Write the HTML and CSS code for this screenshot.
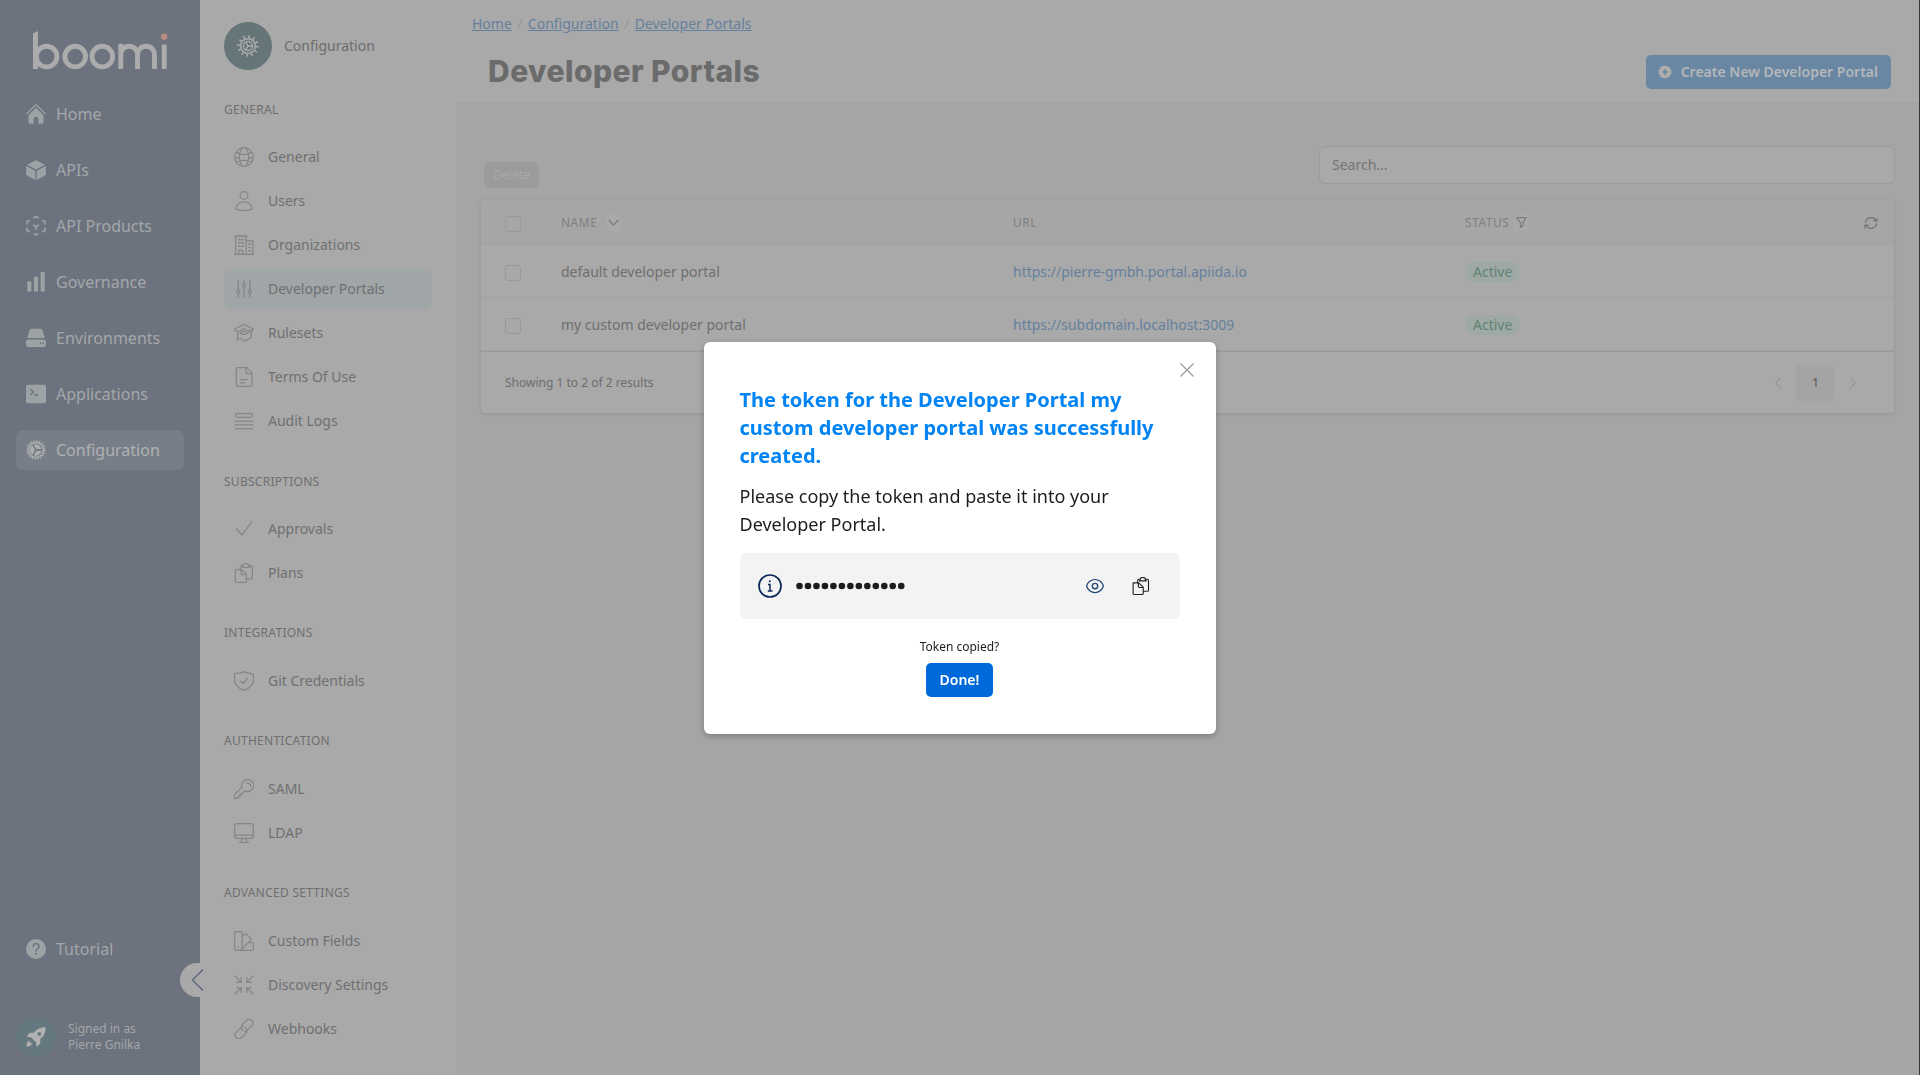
FILE: index.html
```html
<!DOCTYPE html>
<html lang="en">
<head>
<meta charset="utf-8">
<title>Developer Portals</title>
<link rel="stylesheet" href="styles.css">
</head>
<body>
<svg class="sprite" xmlns="http://www.w3.org/2000/svg">
  <symbol id="cog" viewBox="0 0 24 24"><circle cx="12" cy="12" r="10.200" fill="none" stroke="currentColor" stroke-width="3" stroke-dasharray="1.700 3.641"/><circle cx="12" cy="12" r="8" fill="none" stroke="currentColor" stroke-width="1.600"/><circle cx="12" cy="12" r="5" fill="none" stroke="currentColor" stroke-width="1.400"/><path d="M12 12h5M12 12 9.500 7.700M12 12l-2.500 4.300" fill="none" stroke="currentColor" stroke-width="1.600"/></symbol>
  <symbol id="cog-solid" viewBox="0 0 24 24"><circle cx="12" cy="12" r="10.600" fill="none" stroke="currentColor" stroke-width="2.200" stroke-dasharray="1.500 1.830"/><circle cx="12" cy="12" r="9" fill="none" stroke="currentColor" stroke-width="1.700"/><path d="M10.300 11.200 7.500 6.400A7 7 0 0 0 7.500 17.600l2.800-4.800a2 2 0 0 1 0-1.600zM12.600 10.900h5.900A7 7 0 0 0 9.600 5.400zM12.600 13.100h5.900A7 7 0 0 1 9.600 18.600z" fill="currentColor"/></symbol>
  <symbol id="home" viewBox="0 0 24 24"><path d="M.7 12 11 1.500a1.400 1.400 0 0 1 2 0L23.300 12" fill="none" stroke="currentColor" stroke-width="1.500" stroke-linecap="round"/><path d="M12 4.500 3 13.500V22a1.700 1.700 0 0 0 1.700 1.700h4.500V18a2.800 2.800 0 0 1 5.600 0v5.700h4.500A1.700 1.700 0 0 0 21 22v-8.500z" fill="currentColor"/></symbol>
  <symbol id="cube" viewBox="0 0 24 24"><path d="M12 .2 22.800 5.700 12 11.300 1.200 5.700zM.2 7.300 11.200 13v11L1.200 18.700a1.800 1.800 0 0 1-1-1.600zM23.800 7.300 12.800 13v11l10-5.300a1.800 1.800 0 0 0 1-1.600z" fill="currentColor"/></symbol>
  <symbol id="api-products" viewBox="0 0 24 24"><path d="M9.500 2 12 .8 14.500 2M4 5.300 1.200 6.800V9.500M1.200 15v2.500L4 19M20 5.300l2.800 1.500V9.500M22.800 15v2.500L20 19M9.300 11l2.700 1.600 2.700-1.600M12 12.600v2.900" fill="none" stroke="currentColor" stroke-width="2" stroke-linecap="round" stroke-linejoin="round"/><path d="M9 21.500h6l-3 2z" fill="currentColor" stroke="currentColor" stroke-linejoin="round"/></symbol>
  <symbol id="bars" viewBox="0 0 24 24"><g fill="currentColor"><rect x="1.500" y="11" width="5" height="12.800" rx="1.600"/><rect x="9.500" y="5.500" width="5" height="18.300" rx="1.600"/><rect x="17.500" y="0" width="5" height="23.800" rx="1.600"/></g></symbol>
  <symbol id="drive" viewBox="0 0 24 24"><path d="M4.300 2.700A2.500 2.500 0 0 1 6.700 1h10.600a2.500 2.500 0 0 1 2.400 1.700l2.900 9.300H1.400z" fill="currentColor"/><path d="M3 13.700h18a3 3 0 0 1 3 3v3a3 3 0 0 1-3 3H3a3 3 0 0 1-3-3v-3a3 3 0 0 1 3-3zm13.500 3.400v2h1.500v-2zm3 0v2H21v-2z" fill="currentColor" fill-rule="evenodd"/></symbol>
  <symbol id="terminal" viewBox="0 0 24 24"><path fill-rule="evenodd" d="M2 1h20a2 2 0 0 1 2 2v18a2 2 0 0 1-2 2H2a2 2 0 0 1-2-2V3a2 2 0 0 1 2-2zm2.500 5.500 3.300 3-3.300 3 1.200 1.200 4.300-4.200-4.300-4.200zM9.700 12v1.700h4.800V12z" fill="currentColor"/></symbol>
  <symbol id="help" viewBox="0 0 24 24"><circle cx="12" cy="12" r="12" fill="currentColor"/><path d="M8.500 9a3.500 3.500 0 1 1 5.200 3c-1.200.7-1.700 1.200-1.700 2.700" fill="none" stroke="#6c737e" stroke-width="1.600" stroke-linecap="round"/><circle cx="12" cy="18" r="1.100" fill="#6c737e"/></symbol>
  <symbol id="rocket" viewBox="0 0 24 24"><path fill-rule="evenodd" d="M23.500.4C17 .3 12.500 3 9.500 7H5.500C3.500 7.500 2 9.700 1 12l4.700.3L12 18.300l.4 5.300c2.300-1 4.500-2.700 4.800-4.700l-.2-4.300c4-3.200 6.800-7.500 6.500-14.200zM16 6a2.300 2.300 0 1 1 0 4.600A2.300 2.300 0 0 1 16 6zM4.300 15.500c-2 .8-3.500 4-4 8 4-.4 7.200-2 8-4l-2.600.8.500-2.300-2.700.5z" fill="currentColor"/></symbol>
  <symbol id="globe" viewBox="0 0 24 24"><g class="line"><circle cx="12" cy="12" r="11.200"/><path d="M9.500 1.200C5.500 8 5.500 16 9.500 22.800M14.500 1.200c4 6.800 4 14.800 0 21.600M2.500 6.500c6 3 13 3 19 0M2.500 17.500c6-2 13-2 19 0M.8 12.500c2 .8 4 1 6 1.200M17.200 13.700c2-.2 4-.4 6-1.200"/></g></symbol>
  <symbol id="user" viewBox="0 0 24 24"><g class="line"><circle cx="12" cy="5.300" r="4.600"/><path d="M2.500 21.500C2.500 16 6.500 12.900 12 12.900s9.500 3.100 9.500 8.600c-2 1.300-5 1.900-9.500 1.900s-7.500-.6-9.500-1.900z"/></g></symbol>
  <symbol id="building" viewBox="0 0 24 24"><g class="line"><path d="M0 23.200h24M2 23V1.500h12.500V23M.8 1h15M14.500 7h8v16M6 23v-4.500h4.500V23"/><path d="M5.500 5.500h1.500M9.500 5.500H11M5.500 9.500h1.500M9.500 9.500H11M5.500 13.500h1.500M9.500 13.500H11M18 11h1.200M18 15h1.200M18 19h1.200" stroke-width="2"/></g></symbol>
  <symbol id="sliders" viewBox="0 0 24 24"><g class="line" stroke-width="2"><path d="M5 1.800v11M5 17v5.200M12 1.800v3.500M12 9.500v12.700M19 1.800v11M19 17v5.200"/><circle cx="5" cy="15" r="1.900"/><circle cx="12" cy="7.500" r="1.900"/><circle cx="19" cy="15" r="1.900"/></g></symbol>
  <symbol id="cap" viewBox="0 0 24 24"><g class="line"><path d="M12 1.500-.3 8 4 10.500 14 6.500M12 1.500 24.300 8 12 14M4.500 10.500V21M8 12.500c0-1.800 2.200-2.500 4-2.500l7-1.500M3 19l1.500-1.500L6 19M7 12.500 12 14M8 18.500l4.500 3.200 8.300-4.200V10"/></g></symbol>
  <symbol id="doc" viewBox="0 0 24 24"><g class="line"><path d="M4.500.7h10.700l6.300 6.300v14.500a1.800 1.800 0 0 1-1.800 1.800H4.500a1.800 1.800 0 0 1-1.800-1.800v-19A1.800 1.800 0 0 1 4.500.7zM14.500.9v5a2 2 0 0 0 2 2h4.800M7.500 15h9M7.500 19h5"/></g></symbol>
  <symbol id="logs" viewBox="0 0 24 24"><g class="line"><rect x="1.800" y="3" width="20.400" height="4.500" rx="2"/><path d="M1.500 12h21M1.500 16.500h21M1.500 21h21"/></g></symbol>
  <symbol id="check" viewBox="0 0 24 24"><path class="line" d="m2.800 11.700 6.700 7.700L21.500 3.200"/></symbol>
  <symbol id="clipboard" viewBox="0 0 24 24"><g class="line"><path d="M1.500 7.800H9l6 6v8a1.500 1.500 0 0 1-1.500 1.500H3A1.500 1.500 0 0 1 1.500 22zM8.500 8v4.500a1.500 1.500 0 0 0 1.500 1.500h4.800M7.500 7.500v-3A1.500 1.500 0 0 1 9 3h2M17.500 3h3A1.500 1.500 0 0 1 22 4.500v13a1.500 1.500 0 0 1-1.500 1.500h-5.300M11 3a3.500 2.500 0 0 1 7 0l1 2.200h-9z"/></g></symbol>
  <symbol id="shield" viewBox="0 0 24 24"><g class="line"><path d="M.8 4.300A1.500 1.500 0 0 1 2.300 3C6 3 9.500 2 12 .7 14.500 2 18 3 21.700 3a1.500 1.500 0 0 1 1.500 1.500V10c0 6-4.500 11-11.200 13.300C5.300 21 .8 16 .8 10z"/><path d="m7.800 12 3.500 3.200 4.800-6.500"/></g></symbol>
  <symbol id="key" viewBox="0 0 24 24"><g class="line"><path d="M16.500.5a7.300 7.300 0 0 0-7 9.300L.5 19v4.300h4.300v-2.500h2.500v-2.600h2.500l3-4a7.300 7.300 0 1 0 3.700-13.700zM15.500 5c2.500 0 4.500 1.500 4.500 4"/></g></symbol>
  <symbol id="monitor" viewBox="0 0 24 24"><g class="line"><rect x=".8" y=".8" width="22.400" height="17.700" rx="2.500"/><path d="M1 14.500h22M9.500 18.500 8.500 23M14.500 18.500l1 4.500M6.500 23.200h11"/></g></symbol>
  <symbol id="swatch" viewBox="0 0 24 24"><g class="line"><rect x=".8" y=".8" width="9" height="22.400" rx="2"/><path d="m10 6.500 2.700-2.700a1.400 1.400 0 0 1 2 0L20 9a1.400 1.400 0 0 1 0 2L8.500 22.500M17.500 14h4.200a1.500 1.500 0 0 1 1.500 1.500v6.200a1.500 1.500 0 0 1-1.500 1.500H6M5 19v.3"/></g></symbol>
  <symbol id="collapse" viewBox="0 0 24 24"><g class="line" stroke-width="1.800"><path d="m1.500 1.500 7 7M8.700 3v5.700H3M22.500 1.500l-7 7M15.300 3v5.700H21M1.500 22.500l7-7M8.700 21v-5.700H3M22.500 22.500l-7-7M15.300 21v-5.700H21"/></g></symbol>
  <symbol id="link" viewBox="0 0 24 24"><g class="line"><path d="m10.500 8.500-8 7.500a4.600 4.600 0 0 0 6.500 6.500l5-5a4.600 4.600 0 0 0 0-6.500l-1-.8M13.500 15.500l8-7.500A4.600 4.600 0 0 0 15 1.500l-5 5a4.600 4.600 0 0 0 0 6.500l1 .8"/></g></symbol>
  <symbol id="refresh" viewBox="0 0 24 24"><path d="M2.500 10.500A10 10 0 0 1 21 8M21.500 13.500A10 10 0 0 1 3 16M22.700 3.500 22 9l-5.500-1M1.300 20.500 2 15l5.500 1" fill="none" stroke="currentColor" stroke-width="2" stroke-linecap="round" stroke-linejoin="round"/></symbol>
</svg>

<div class="app">
  <nav class="sidebar">
    <svg class="logo" viewBox="0 0 135 39" width="135" height="39" role="img" aria-label="boomi">
      <g fill="none" stroke="#acacac" stroke-width="4.900">
        <path d="M2.450 38V2.500"/>
        <circle cx="13.600" cy="25.600" r="10.300"/><circle cx="42.200" cy="25.600" r="10.300"/><circle cx="69.300" cy="25.600" r="10.300"/>
        <path d="M87.800 38V12.800M87.800 24.500c0-5 3-9.200 8.400-9.200s8.300 4 8.300 9.200V38M104.500 24.500c0-5 3-9.200 8.500-9.200s8.500 4 8.500 9.200V38M131.200 38V13.500"/>
      </g>
      <path d="M0 2.500 4.900 0v5H0z" fill="#acacac"/>
      <circle cx="131.200" cy="5.800" r="3.200" fill="#b68a80"/>
    </svg>
    <ul class="nav">
      <li class="nav-item"><svg><use href="#home"/></svg>Home</li>
      <li class="nav-item"><svg><use href="#cube"/></svg>APIs</li>
      <li class="nav-item"><svg><use href="#api-products"/></svg>API Products</li>
      <li class="nav-item"><svg><use href="#bars"/></svg>Governance</li>
      <li class="nav-item"><svg><use href="#drive"/></svg>Environments</li>
      <li class="nav-item"><svg><use href="#terminal"/></svg>Applications</li>
      <li class="nav-item nav-item--active"><svg><use href="#cog-solid"/></svg>Configuration</li>
    </ul>
    <div class="nav-item nav-item--bottom"><svg><use href="#help"/></svg>Tutorial</div>
    <div class="account">
      <span class="avatar"><svg><use href="#rocket"/></svg></span>
      <span>Signed in as<br>Pierre Gnilka</span>
    </div>
    <button class="collapse-toggle" aria-label="Collapse"><svg viewBox="0 0 12 22"><path d="M12 .5 1.500 11 12 21.500" fill="none" stroke="#647080" stroke-width="1.600"/></svg></button>
  </nav>

  <aside class="settings">
    <div class="settings-head"><span class="settings-badge"><svg><use href="#cog"/></svg></span>Configuration</div>
    <h2 class="group">General</h2>
    <ul class="menu">
      <li><svg><use href="#globe"/></svg>General</li>
      <li><svg><use href="#user"/></svg>Users</li>
      <li><svg><use href="#building"/></svg>Organizations</li>
      <li class="active"><svg><use href="#sliders"/></svg>Developer Portals</li>
      <li><svg><use href="#cap"/></svg>Rulesets</li>
      <li><svg><use href="#doc"/></svg>Terms Of Use</li>
      <li><svg><use href="#logs"/></svg>Audit Logs</li>
    </ul>
    <h2 class="group">Subscriptions</h2>
    <ul class="menu">
      <li><svg><use href="#check"/></svg>Approvals</li>
      <li><svg><use href="#clipboard"/></svg>Plans</li>
    </ul>
    <h2 class="group">Integrations</h2>
    <ul class="menu">
      <li><svg><use href="#shield"/></svg>Git Credentials</li>
    </ul>
    <h2 class="group">Authentication</h2>
    <ul class="menu">
      <li><svg><use href="#key"/></svg>SAML</li>
      <li><svg><use href="#monitor"/></svg>LDAP</li>
    </ul>
    <h2 class="group">Advanced Settings</h2>
    <ul class="menu">
      <li><svg><use href="#swatch"/></svg>Custom Fields</li>
      <li><svg><use href="#collapse"/></svg>Discovery Settings</li>
      <li><svg><use href="#link"/></svg>Webhooks</li>
    </ul>
  </aside>

  <main class="content">
    <header class="page-head">
      <div class="crumbs"><a>Home</a><i>/</i><a>Configuration</a><i>/</i><a>Developer Portals</a></div>
      <div class="title-row">
        <h1>Developer Portals</h1>
        <button class="create"><svg viewBox="0 0 14 14"><circle cx="7" cy="7" r="6.500" fill="#acacac"/><path d="M7 4v6M4 7h6" stroke="#6986a2" stroke-width="1.500"/></svg>Create New Developer Portal</button>
      </div>
    </header>
    <div class="toolbar">
      <button class="delete">Delete</button>
      <div class="search">Search...</div>
    </div>
    <section class="table">
      <div class="row row--head">
        <span class="box"></span>
        <span class="cell">NAME<span class="chip chip--sort"><svg viewBox="0 0 12 8"><path d="m.7 1 5.300 5.600L11.300 1" fill="none" stroke="currentColor" stroke-width="1.200"/></svg></span></span>
        <span>URL</span>
        <span class="cell">STATUS<span class="chip"><svg viewBox="0 0 12 12"><path d="M.8.800h10.400L7.500 6.200v3.600L4.800 11.300V6.200z" fill="none" stroke="currentColor" stroke-width="1.100" stroke-linejoin="round"/></svg></span></span>
        <svg class="reload"><use href="#refresh"/></svg>
      </div>
      <div class="row">
        <span class="box"></span><span>default developer portal</span><a>https://pierre-gmbh.portal.apiida.io</a><span><b class="status">Active</b></span>
      </div>
      <div class="row">
        <span class="box"></span><span>my custom developer portal</span><a>https://subdomain.localhost:3009</a><span><b class="status">Active</b></span>
      </div>
      <footer class="table-foot">
        <span>Showing 1 to 2 of 2 results</span>
        <div class="pager">
          <svg viewBox="0 0 6 12"><path d="M5.500.5.800 6l4.700 5.500" fill="none" stroke="currentColor"/></svg>
          <span class="page">1</span>
          <svg viewBox="0 0 6 12"><path d="M.5.500 5.200 6 .5 11.500" fill="none" stroke="currentColor"/></svg>
        </div>
      </footer>
    </section>
  </main>
</div>

<div class="overlay">
  <div class="modal" role="dialog">
    <button class="close" aria-label="Close"><svg viewBox="0 0 14 14"><path d="m.5.500 13 13M13.500.500l-13 13" stroke="#9b9b9b" stroke-width="1.200"/></svg></button>
    <h3>The token for the Developer Portal my custom developer portal was successfully created.</h3>
    <p>Please copy the token and paste it into your Developer Portal.</p>
    <div class="token">
      <svg class="info" viewBox="0 0 24 24"><circle cx="12" cy="12" r="11" fill="none" stroke="#0b2859" stroke-width="1.700"/><path d="M10 10.500h2v6.500M9.800 17h4.700" fill="none" stroke="#0b2859" stroke-width="1.500"/><circle cx="11.800" cy="7.300" r="1" fill="#0b2859"/></svg>
      <svg class="secret" viewBox="0 0 110 8"><path d="M3.500 4h101.800" stroke="#1c1c1c" stroke-width="6.600" stroke-linecap="round" stroke-dasharray="0 8.480"/></svg>
      <svg class="eye" viewBox="0 0 24 24"><path d="M.8 12C2 7 7 3.300 12 3.300S22 7 23.200 12C22 17 17 20.700 12 20.700S2 17 .8 12z" fill="none" stroke="#1f4677" stroke-width="1.600"/><circle cx="12" cy="12" r="3.600" fill="none" stroke="#1f4677" stroke-width="1.800"/></svg>
      <svg class="copy"><use href="#clipboard"/></svg>
    </div>
    <div class="copied">Token copied?</div>
    <button class="done">Done!</button>
  </div>
</div>
</body>
</html>
```
FILE: styles.css
```css
* { box-sizing: border-box; }
body, h1, h2, h3, p, ul { margin: 0; padding: 0; }
ul { list-style: none; }
body { height: 1075px; overflow: hidden; background: #a5a5a5; font: 14px/20px "Noto Sans", sans-serif; color: #6f6f6f; }
button { border: 0; padding: 0; font: inherit; }
svg { display: block; flex: none; }
.sprite { position: absolute; width: 0; height: 0; }
.line { fill: none; stroke: currentColor; stroke-width: 1.5; stroke-linecap: round; stroke-linejoin: round; }
.app { display: flex; height: 1075px; border-right: 1px solid #353637; }

/* Primary navigation */
.sidebar { position: relative; display: flex; flex-direction: column; width: 200px; padding: 31px 16px 18px; background: #6c737e; color: #a3a6a8; }
.logo { margin-left: 16.5px; }
.nav { display: flex; flex-direction: column; gap: 16px; margin-top: 23.5px; }
.nav-item { display: flex; align-items: center; gap: 10px; height: 40px; padding-left: 10px; border-radius: 7px; font-size: 16px; color: #a4a7aa; }
.nav-item svg { width: 20px; height: 20px; color: #9da3a5; }
.nav-item--active { background: #777e88; color: #b0b1b2; }
.nav-item--active svg { color: #adafaf; }
.nav-item--bottom { margin-top: auto; margin-bottom: 48px; }
.account { display: flex; align-items: center; gap: 12px; font-size: 12px; line-height: 16px; height: 40px; }
.avatar { display: grid; place-items: center; width: 40px; height: 40px; border-radius: 50%; background: #65777f; color: #b1b1b1; }
.avatar svg { width: 20px; height: 20px; }
.collapse-toggle { position: absolute; left: 180px; top: 963px; display: flex; align-items: center; width: 23px; height: 34px; padding: 0 0 0 11px; border-radius: 17px 0 0 17px; background: #a9a9a9; }
.collapse-toggle svg { width: 12px; height: 22px; }

/* Settings menu */
.settings { width: 256px; padding: 22px 24px 0; background: #a9a9a9; }
.settings-head { display: flex; align-items: center; gap: 12px; height: 48px; margin-bottom: 29.7px; color: #6d6d6d; }
.settings-badge { display: grid; place-items: center; width: 48px; height: 48px; border-radius: 50%; background: #667578; color: #adadad; }
.settings-badge svg { width: 22px; height: 22px; }
.group { height: 20px; font-size: 12px; line-height: 20px; font-weight: 400; letter-spacing: .27px; text-transform: uppercase; color: #6f6f6f; }
.menu { display: flex; flex-direction: column; gap: 4px; padding: 17.8px 0 30.1px; }
.menu li { display: flex; align-items: center; gap: 14px; height: 40px; padding-left: 10px; border-radius: 6px; color: #6f7070; }
.menu svg { width: 20px; height: 20px; color: #868686; }
.menu .active { background: #a0a5a8; }

/* Page content */
.content { flex: 1; }
.page-head { height: 103px; padding: 14px 28px 0 16px; background: #a9a9a9; border-bottom: 1px solid #a1a1a1; }
.crumbs { display: flex; color: #64809d; }
.crumbs a { text-decoration: underline; }
.crumbs i { width: 16px; text-align: center; color: #979797; font-style: normal; }
.title-row { display: flex; justify-content: space-between; padding: 21px 0 0 16px; }
h1 { margin-top: -1px; font: 800 30px/34px Inter, sans-serif; letter-spacing: .45px; color: #6b6b6b; }
.create { display: flex; align-items: center; gap: 9px; height: 34px; padding: 0 13px 0 12px; border-radius: 5px; background: #6986a2; color: #b4b7b9; font-weight: 600; }
.create svg { width: 14px; height: 14px; }
.toolbar { display: flex; align-items: flex-start; justify-content: space-between; padding: 43px 24px 12px 28px; }
.delete { width: 55px; height: 26px; margin-top: 16px; border-radius: 6px; background: #9b9b9b; color: #a9a9a9; font-size: 12px; }
.search { width: 576px; height: 38px; padding: 8px 12px; border: 1px solid #9a9a9a; border-radius: 6px; background: #a9a9a9; color: #747474; }
.table { margin: 0 25px; height: 213px; border-radius: 4px; background: #a9a9a9; box-shadow: 0 1px 4px rgba(0,0,0,.1); }
.row { display: grid; grid-template-columns: 56px 452px 452px 385px auto; align-items: center; height: 53px; padding: 1px 0 0 24px; border-bottom: 1px solid #a2a2a2; }
.row a { color: #64809d; }
.row--head { height: 45px; background: #a6a6a6; font-size: 12px; letter-spacing: .5px; color: #808080; border-radius: 4px 4px 0 0; }
.box { width: 16px; height: 16px; margin-top: 3px; border: 1px solid #999; border-radius: 3px; }
.cell { display: flex; align-items: center; gap: 5px; }
.chip { display: grid; place-items: center; width: 15px; height: 17px; border-radius: 4px; background: #a9a9a9; color: #727272; }
.chip svg { width: 11px; }
.chip--sort { margin-left: 4px; }
.reload { width: 14px; height: 14px; margin-left: 14px; color: #747474; }
.status { display: inline-block; height: 20px; padding: 0 8px; border-radius: 10px; background: #9ea8a4; color: #5f8575; font-weight: 400; }
.table-foot { display: flex; justify-content: space-between; align-items: center; height: 62px; padding: 0 38px 0 24px; border-top: 1px solid #999; font-size: 12px; color: #6d6d6d; }
.pager { display: flex; align-items: center; gap: 15px; color: #8b8b8b; }
.pager svg { width: 6px; height: 12px; }
.page { width: 39px; height: 36px; border-radius: 4px; background: #a4a4a4; color: #636363; text-align: center; line-height: 36px; font-weight: 500; }

/* Token dialog */
.overlay { position: fixed; inset: 0 1px 0 0; display: grid; place-items: center; }
.modal { position: relative; width: 512px; height: 392px; padding: 44px 36px 36px; border-radius: 6px; background: #fff; color: #1c1c1c; box-shadow: 0 2px 6px rgba(0,0,0,.25); display: flex; flex-direction: column; align-items: center; }
.modal h3 { align-self: stretch; font-size: 20px; line-height: 28px; font-weight: 700; color: #0083f3; }
.modal p { align-self: stretch; margin-top: 12px; font-size: 18px; line-height: 28px; }
.close { position: absolute; right: 21.5px; top: 21px; background: none; }
.close svg { width: 14px; height: 14px; }
.token { display: flex; align-items: center; align-self: stretch; height: 66px; margin-top: 15.5px; padding: 0 30px 0 18px; border-radius: 6px; background: #f3f3f3; }
.info { width: 24px; height: 24px; margin-right: 14px; }
.secret { width: 110px; height: 8px; margin-right: auto; }
.eye { width: 18px; height: 18px; margin-right: 28px; }
.copy { width: 18px; height: 18px; color: #222; }
.copied { margin-top: 17.5px; font-size: 12px; line-height: 20px; }
.done { width: 67px; height: 34px; margin-top: 6px; flex: none; border-radius: 5px; background: #0069d9; color: #fff; font-weight: 600; }
```
